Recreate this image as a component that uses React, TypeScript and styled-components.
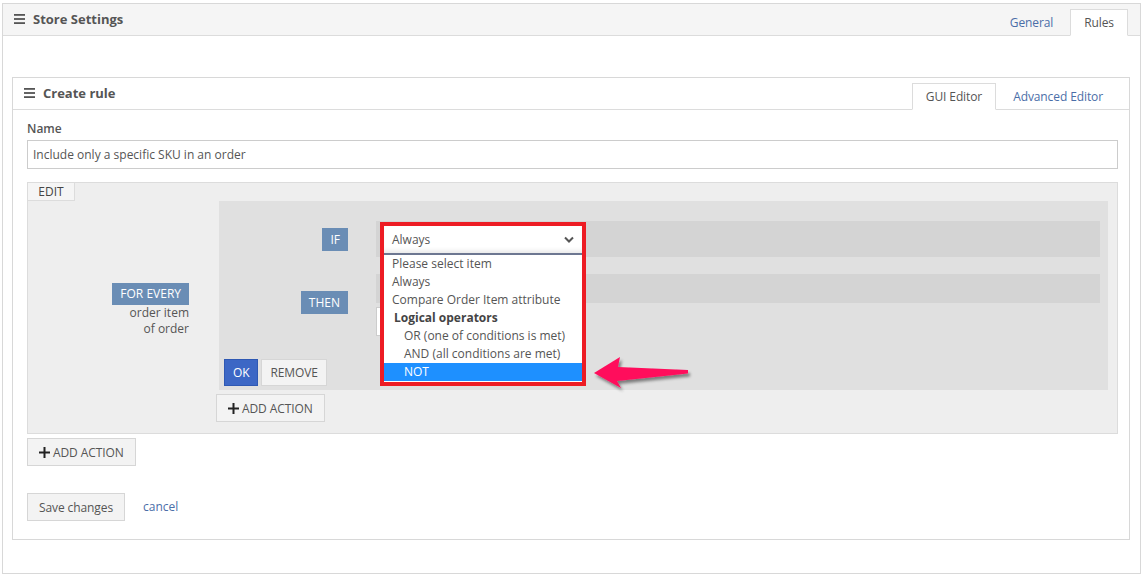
import styled, { createGlobalStyle } from "styled-components";

const GlobalStyle = createGlobalStyle`
  html, body {
    margin: 0;
    padding: 0;
    background: #fff;
  }
  body {
    font-family: "Open Sans", "Liberation Sans", sans-serif;
    font-size: 12px;
    color: #555;
  }
  * {
    box-sizing: border-box;
  }
`;

const Page = styled.div`
  position: relative;
  width: 1145px;
  padding: 3px 4px 3px 2px;
`;

const Panel = styled.section`
  border: 1px solid #d8d8d8;
  background: #fff;
`;

const PanelHeader = styled.header<{ $shade: string }>`
  display: flex;
  height: 32px;
  padding-left: 11px;
  background: ${(p) => p.$shade};
  border-bottom: 1px solid #dcdcdc;
`;

const Title = styled.h2`
  margin: 0;
  display: flex;
  align-items: center;
  gap: 8px;
  font-size: 13px;
  font-weight: 700;
  color: #555;
  padding-bottom: 1px;
`;

const Tabs = styled.nav<{ $right: number; $gap: number }>`
  margin-left: auto;
  margin-right: ${(p) => p.$right}px;
  display: flex;
  align-items: flex-end;
  gap: ${(p) => p.$gap}px;
`;

const Tab = styled.div<{ $active?: boolean }>`
  height: 27px;
  margin-bottom: -1px;
  padding: 0 13px;
  display: flex;
  align-items: center;
  letter-spacing: -0.1px;
  border: 1px solid ${(p) => (p.$active ? "#dcdcdc" : "transparent")};
  border-bottom-color: ${(p) => (p.$active ? "#fff" : "transparent")};
  background: ${(p) => (p.$active ? "#fff" : "transparent")};
  color: ${(p) => (p.$active ? "#555" : "#4b6ea8")};
`;

const OuterBody = styled.div`
  padding: 41px 10px 33px 9px;
`;

const InnerBody = styled.div`
  padding: 10px 11px 18px 14px;
`;

const Label = styled.label`
  display: block;
  font-weight: 600;
  line-height: 17px;
  margin-bottom: 3px;
`;

const TextInput = styled.input`
  display: block;
  width: 100%;
  height: 29px;
  padding: 0 5px;
  border: 1px solid #ccc;
  font: inherit;
  color: #555;
  outline: none;
`;

const RuleBox = styled.div`
  margin-top: 13px;
  border: 1px solid #dcdcdc;
  background: #eee;
  padding: 0 9px 11px 0;
`;

const EditTab = styled.div`
  width: 48px;
  height: 19px;
  margin: -1px 0 0 -1px;
  border: 1px solid #dcdcdc;
  background: #f5f5f5;
  color: #444;
  line-height: 17px;
  text-align: center;
`;

const RuleRow = styled.div`
  display: flex;
`;

const LeftCol = styled.div`
  width: 161px;
  padding-top: 82px;
  display: flex;
  flex-direction: column;
  align-items: flex-end;
  line-height: 16px;
  text-align: right;
`;

const RightCol = styled.div`
  flex: 1;
  margin-left: 30px;
  display: flex;
  flex-direction: column;
  align-items: flex-start;
`;

const InnerBox = styled.div`
  align-self: stretch;
  background: #e0e0e0;
  padding: 20px 8px 4px 5px;
`;

const CondGrid = styled.div`
  display: grid;
  grid-template-columns: 124px 1fr;
  column-gap: 28px;
  row-gap: 17px;
`;

const Tag = styled.span<{ $h?: number }>`
  display: inline-block;
  height: ${(p) => p.$h ?? 23}px;
  line-height: ${(p) => p.$h ?? 23}px;
  padding: 0 8px;
  background: #6a8db5;
  color: #fff;
  white-space: nowrap;
`;

const GridTag = styled(Tag)<{ $top?: number }>`
  justify-self: end;
  align-self: ${(p) => (p.$top !== undefined ? "start" : "center")};
  margin-top: ${(p) => p.$top ?? 0}px;
`;

const Bar = styled.div<{ $h: number }>`
  height: ${(p) => p.$h}px;
  background: #d4d4d4;
  padding: 5px 8px;
`;

const SelectSlot = styled.div`
  position: relative;
  width: 198px;
  height: 27px;
`;

const Highlight = styled.div`
  position: absolute;
  top: -4px;
  left: -4px;
  width: 206px;
  border: 4px solid #ed1c24;
  background: #fff;
  z-index: 2;
`;

const Select = styled.div`
  height: 29px;
  padding: 0 8px;
  display: flex;
  align-items: center;
  justify-content: space-between;
  border-bottom: 2px solid #6d7791;
  box-shadow: inset 0 -5px 5px -3px rgba(0, 0, 0, 0.1);
  color: #555;
`;

const OptionList = styled.ul`
  list-style: none;
  margin: 0;
  padding: 0 0 1px;
`;

const Option = styled.li<{ $indent: number; $bold?: boolean; $selected?: boolean }>`
  height: 18px;
  line-height: 18px;
  padding-left: ${(p) => p.$indent}px;
  font-weight: ${(p) => (p.$bold ? 700 : 400)};
  background: ${(p) => (p.$selected ? "#1e90ff" : "#fff")};
  color: ${(p) => (p.$selected ? "#fff" : p.$bold ? "#444" : "#555")};
  white-space: nowrap;
`;

const ThenCell = styled.div`
  display: flex;
  flex-direction: column;
  gap: 4px;
`;

const WhiteSelect = styled.div`
  width: 200px;
  height: 29px;
  background: #fff;
  border: 1px solid #ccc;
`;

const ActionRow = styled.div<{ $top: number }>`
  margin-top: ${(p) => p.$top}px;
  display: flex;
  align-items: center;
  gap: 3px;
`;

const Button = styled.button<{ $primary?: boolean; $h?: number; $pad?: number }>`
  height: ${(p) => p.$h ?? 27}px;
  padding: 0 ${(p) => p.$pad ?? 8}px;
  display: inline-flex;
  align-items: center;
  gap: 3px;
  font: inherit;
  letter-spacing: -0.1px;
  border: 1px solid ${(p) => (p.$primary ? "#2e58b3" : "#d6d6d6")};
  background: ${(p) => (p.$primary ? "#3c67c5" : "#f3f3f3")};
  color: ${(p) => (p.$primary ? "#fff" : "#555")};
  cursor: pointer;
`;

const AddButton = styled(Button)<{ $left?: number }>`
  margin-left: ${(p) => p.$left ?? 0}px;
  margin-top: 4px;
`;

const FooterRow = styled.div`
  margin-top: 27px;
  display: flex;
  align-items: center;
  gap: 18px;
`;

const CancelLink = styled.a`
  color: #4b6ea8;
  text-decoration: none;
  margin-top: -2px;
`;

const ArrowMark = styled.svg`
  position: absolute;
  left: 590px;
  top: 352px;
  z-index: 3;
`;

const Hamburger = () => (
  <svg width="11" height="10" viewBox="0 0 11 10">
    <rect x="0" y="0" width="11" height="1.8" fill="#555" />
    <rect x="0" y="4.1" width="11" height="1.8" fill="#555" />
    <rect x="0" y="8.2" width="11" height="1.8" fill="#555" />
  </svg>
);

const Plus = () => (
  <svg width="11" height="11" viewBox="0 0 11 11">
    <rect x="4.5" y="0" width="2" height="11" fill="#222" />
    <rect x="0" y="4.5" width="11" height="2" fill="#222" />
  </svg>
);

const Chevron = () => (
  <svg width="10" height="7" viewBox="0 0 10 7">
    <polyline points="1,1.5 5,5.5 9,1.5" fill="none" stroke="#555" strokeWidth="2" />
  </svg>
);

const options = [
  { text: "Please select item", indent: 8 },
  { text: "Always", indent: 8 },
  { text: "Compare Order Item attribute", indent: 8 },
  { text: "Logical operators", indent: 10, bold: true },
  { text: "OR (one of conditions is met)", indent: 20 },
  { text: "AND (all conditions are met)", indent: 20 },
  { text: "NOT", indent: 20, selected: true },
];

export default function App() {
  return (
    <Page>
      <GlobalStyle />
      <Panel>
        <PanelHeader $shade="#f5f5f5">
          <Title>
            <Hamburger />
            Store Settings
          </Title>
          <Tabs $right={12} $gap={3}>
            <Tab>General</Tab>
            <Tab $active>Rules</Tab>
          </Tabs>
        </PanelHeader>

        <OuterBody>
          <Panel>
            <PanelHeader $shade="#fff">
              <Title>
                <Hamburger />
                Create rule
              </Title>
              <Tabs $right={12} $gap={3}>
                <Tab $active>GUI Editor</Tab>
                <Tab>Advanced Editor</Tab>
              </Tabs>
            </PanelHeader>

            <InnerBody>
              <Label>Name</Label>
              <TextInput readOnly value="Include only a specific SKU in an order" />

              <RuleBox>
                <EditTab>EDIT</EditTab>
                <RuleRow>
                  <LeftCol>
                    <Tag $h={22}>FOR EVERY</Tag>
                    <span>order item</span>
                    <span>of order</span>
                  </LeftCol>
                  <RightCol>
                    <InnerBox>
                      <CondGrid>
                        <GridTag>IF</GridTag>
                        <Bar $h={36}>
                          <SelectSlot>
                            <Highlight>
                              <Select>
                                Always
                                <Chevron />
                              </Select>
                              <OptionList>
                                {options.map((o) => (
                                  <Option
                                    key={o.text}
                                    $indent={o.indent}
                                    $bold={o.bold}
                                    $selected={o.selected}
                                  >
                                    {o.text}
                                  </Option>
                                ))}
                              </OptionList>
                            </Highlight>
                          </SelectSlot>
                        </Bar>

                        <GridTag $top={17}>THEN</GridTag>
                        <ThenCell>
                          <Bar $h={29} />
                          <WhiteSelect />
                        </ThenCell>
                      </CondGrid>

                      <ActionRow $top={23}>
                        <Button $primary>OK</Button>
                        <Button>REMOVE</Button>
                      </ActionRow>
                    </InnerBox>
                    <AddButton $left={-3} $h={28} $pad={11}>
                      <Plus />
                      ADD ACTION
                    </AddButton>
                  </RightCol>
                </RuleRow>
              </RuleBox>

              <AddButton $h={28} $pad={11}>
                <Plus />
                ADD ACTION
              </AddButton>

              <FooterRow>
                <Button $h={28} $pad={11}>Save changes</Button>
                <CancelLink href="#">cancel</CancelLink>
              </FooterRow>
            </InnerBody>
          </Panel>
        </OuterBody>
      </Panel>

      <ArrowMark width="104" height="42" viewBox="0 0 104 42">
        <defs>
          <filter id="arrowShadow" x="-20%" y="-30%" width="140%" height="170%">
            <feDropShadow dx="2" dy="3" stdDeviation="1.5" floodColor="#000" floodOpacity="0.45" />
          </filter>
        </defs>
        <path
          d="M4 21 L30 5 L28 15 L98 18 L98 21.5 L27 29 L31 36 Z"
          fill="#ff0d5c"
          filter="url(#arrowShadow)"
        />
      </ArrowMark>
    </Page>
  );
}
